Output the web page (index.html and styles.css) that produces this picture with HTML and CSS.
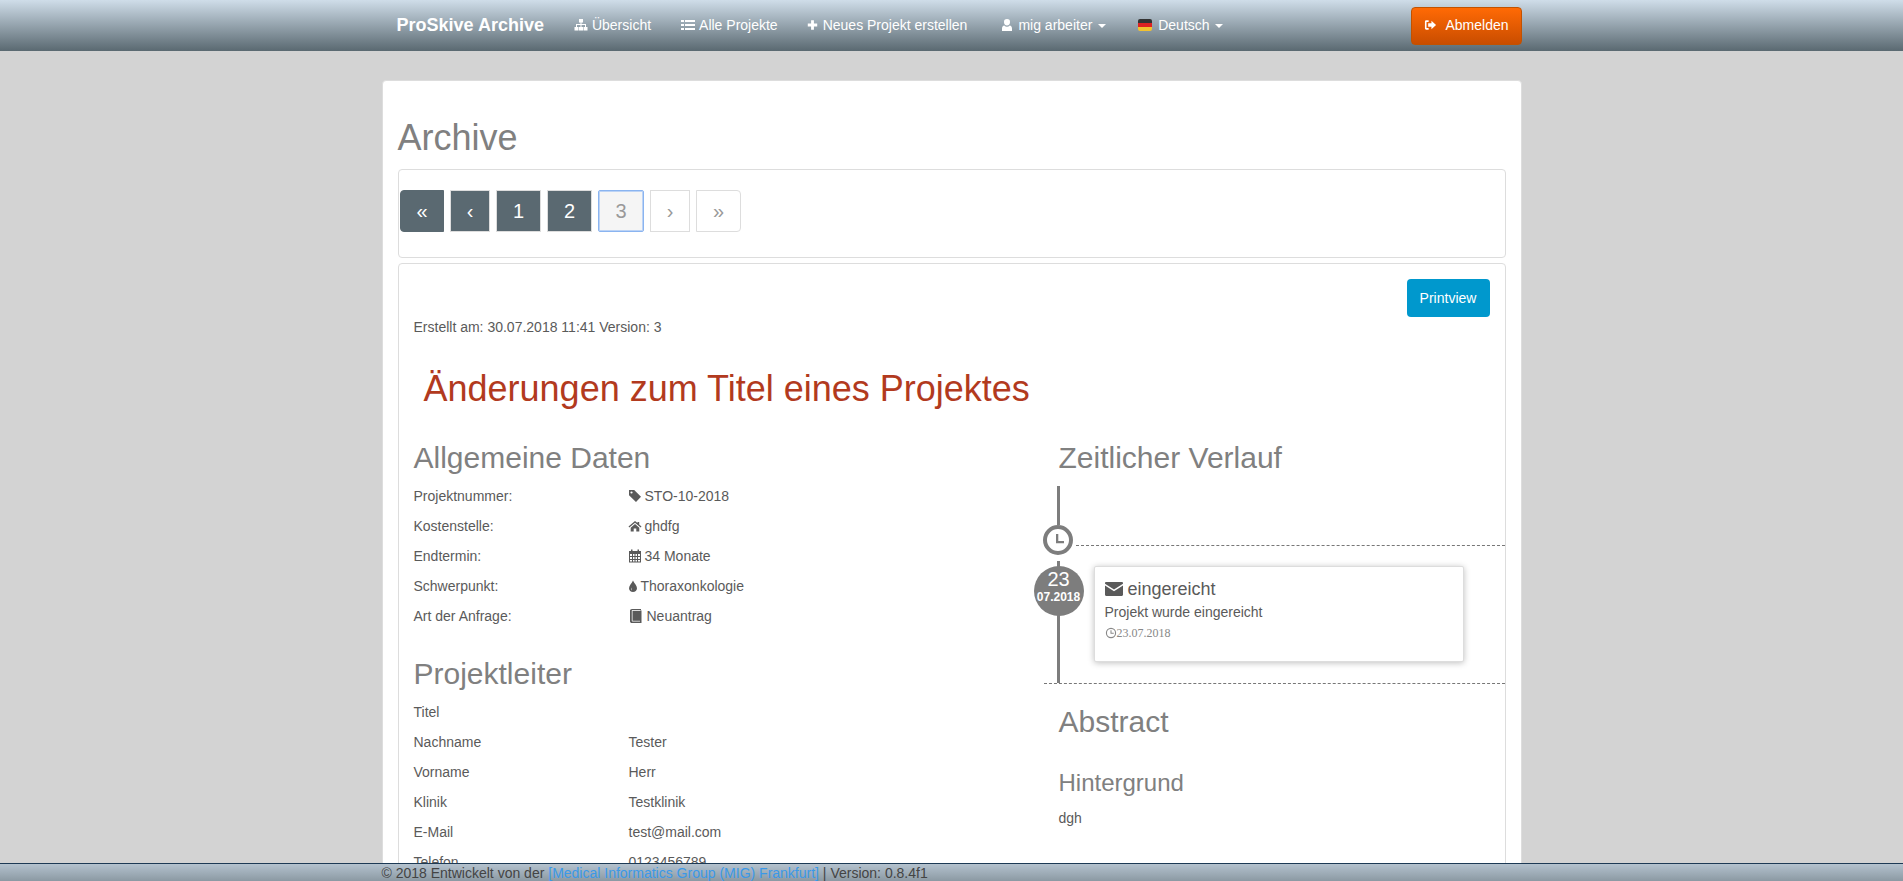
FILE: index.html
```html
<!DOCTYPE html>
<html>
<head>
  <title>ProSkive Archive</title>
  <link rel="stylesheet" href="styles.css">
</head>
<body>

<!-- Icon set -->
<svg class="icon-defs" xmlns="http://www.w3.org/2000/svg">
  <symbol id="i-sitemap" viewBox="0 0 14 14"><path d="M5 1h4v3.500H7.500V6H12v3h1.500v3.500h-4V9H11V7H7.500v2H9v3.500H5V9h1.500V7H3v2h1.500v3.500h-4V9H2V6h4.500V4.500H5z"/></symbol>
  <symbol id="i-list" viewBox="0 0 14 14"><path d="M0 2h3v2H0zM4 2h10v2H4zM0 6h3v2H0zM4 6h10v2H4zM0 10h3v2H0zM4 10h10v2H4z"/></symbol>
  <symbol id="i-plus" viewBox="0 0 14 14"><path d="M5.200 1h3.600v4.200H13v3.600H8.800V13H5.200V8.800H1V5.200h4.200z"/></symbol>
  <symbol id="i-user" viewBox="0 0 14 14"><path d="M7 1a3 3 0 0 1 3 3.200C10 6 9 7.500 7 7.500S4 6 4 4.200A3 3 0 0 1 7 1zM4.300 7.500C5 8.300 6 8.700 7 8.700s2-.4 2.700-1.200c1.500.2 2.300 1.300 2.300 3.300V13H2v-2.200c0-2 .8-3.100 2.300-3.300z"/></symbol>
  <symbol id="i-logout" viewBox="0 0 14 14"><path d="M5 2v1.700H2.700v6.600H5V12H2.500C1.500 12 1 11.400 1 10.500v-7C1 2.600 1.500 2 2.500 2zM8 2.500 13 7l-5 4.500V9H4.500V5H8z"/></symbol>
  <symbol id="i-tag" viewBox="0 0 14 14"><path d="M1 1h5.200L13 7.800 8 13 1 6.200zM3.500 2.400a1.100 1.100 0 1 0 0 2.200 1.100 1.100 0 0 0 0-2.200z" fill-rule="evenodd"/></symbol>
  <symbol id="i-home" viewBox="0 0 14 14"><path d="M7 2l2.500 2.100V3h1.700v2.500L13.500 7.500l-.8.900L7 3.700 1.300 8.400l-.8-.9zM2.700 8.700 7 5l4.300 3.700V12.500H8.300V9.500H5.700v3h-3z"/></symbol>
  <symbol id="i-calendar" viewBox="0 0 14 14"><path d="M3 .5h1.500V2h5V.5H11V2h2v11.500H1V2h2zM2 5v2h2V5zm3 0v2h1.500V5zm2.500 0v2H9V5zM10 5v2h2V5zM2 8v2h2V8zm3 0v2h1.500V8zm2.500 0v2H9V8zM10 8v2h2V8zM2 11v1.500h2V11zm3 0v1.500h1.500V11zm2.500 0v1.500H9V11zm2.500 0v1.500h2V11z" fill-rule="evenodd"/></symbol>
  <symbol id="i-tint" viewBox="0 0 8 14"><path d="M4 1.500C5 4.200 8 6.500 8 9.200 8 11.500 6.200 13 4 13S0 11.500 0 9.200C0 6.500 3 4.200 4 1.500zM2.500 8.500C1.800 9.500 1.800 11 3.200 11.500 2.600 10.800 2.300 9.800 2.500 8.500z" fill-rule="evenodd"/></symbol>
  <symbol id="i-book" viewBox="0 0 14 14"><path d="M3 0h9v1H3.500C3 1 2.800 1.300 2.800 1.600v10.200c0 .4.300.7.700.7H11V1.500h1.500V14H3c-1.200 0-2-.7-2-1.800V1.800C1 .7 1.800 0 3 0z"/><path d="M3.500 1.800H11v10H3.500z"/></symbol>
  <symbol id="i-envelope" viewBox="0 0 18 14"><path d="M1.200 0h15.600c.7 0 1.200.5 1.200 1.200v.5L9 7.500 0 1.700v-.5C0 .5.500 0 1.200 0zM0 3.500l9 5.800 9-5.800v9.300c0 .7-.5 1.200-1.200 1.200H1.200C.5 14 0 13.500 0 12.800z"/></symbol>
  <symbol id="i-clock" viewBox="0 0 14 14"><path d="M7 1a6 6 0 1 1 0 12A6 6 0 0 1 7 1zm0 1.300a4.700 4.700 0 1 0 0 9.400 4.700 4.700 0 0 0 0-9.400zM6.400 3.800h1.200v3h2.600V8H6.400z" fill-rule="evenodd"/></symbol>
</svg>

<!-- Top bar -->
<nav class="navbar">
  <div class="navbar-inner">
    <a class="brand" href="#">ProSkive Archive</a>
    <a class="nav-link" href="#"><svg class="ico ico-nav"><use href="#i-sitemap"/></svg>Übersicht</a>
    <a class="nav-link" href="#"><svg class="ico ico-nav ico-list"><use href="#i-list"/></svg>Alle Projekte</a>
    <a class="nav-link" href="#"><svg class="ico ico-nav ico-plus"><use href="#i-plus"/></svg>Neues Projekt erstellen</a>
    <a class="nav-link nav-user" href="#"><svg class="ico ico-nav ico-user"><use href="#i-user"/></svg>mig arbeiter <span class="caret"></span></a>
    <a class="nav-link nav-lang" href="#">
      <svg class="flag" viewBox="0 0 14 12"><rect width="14" height="4" fill="#333"/><rect y="4" width="14" height="4" fill="#d22"/><rect y="8" width="14" height="4" fill="#f2c230"/></svg>Deutsch <span class="caret"></span>
    </a>
    <a class="btn-logout" href="#"><svg class="ico ico-logout"><use href="#i-logout"/></svg>Abmelden</a>
  </div>
</nav>

<main class="card">
  <h1 class="page-title">Archive</h1>

  <div class="panel panel-pager">
    <ul class="pager">
      <li class="page first">«</li>
      <li class="page arrow">‹</li>
      <li class="page">1</li>
      <li class="page">2</li>
      <li class="page current">3</li>
      <li class="page off arrow">›</li>
      <li class="page off">»</li>
    </ul>
  </div>

  <div class="panel panel-main">
    <div class="print-row"><a class="btn-print" href="#">Printview</a></div>
    <p class="meta">Erstellt am: 30.07.2018 11:41 Version: 3</p>
    <h1 class="project-title">Änderungen zum Titel eines Projektes</h1>

    <div class="columns">
      <section class="col-left">
        <h2 class="head">Allgemeine Daten</h2>
        <dl class="rows">
          <dt>Projektnummer:</dt><dd><svg class="ico ico-val"><use href="#i-tag"/></svg>STO-10-2018</dd>
          <dt>Kostenstelle:</dt><dd><svg class="ico ico-val"><use href="#i-home"/></svg>ghdfg</dd>
          <dt>Endtermin:</dt><dd><svg class="ico ico-val"><use href="#i-calendar"/></svg>34 Monate</dd>
          <dt>Schwerpunkt:</dt><dd><svg class="ico ico-tint"><use href="#i-tint"/></svg>Thoraxonkologie</dd>
          <dt>Art der Anfrage:</dt><dd><svg class="ico ico-book"><use href="#i-book"/></svg>Neuantrag</dd>
        </dl>

        <h2 class="head head-leader">Projektleiter</h2>
        <dl class="rows rows-leader">
          <dt>Titel</dt><dd></dd>
          <dt>Nachname</dt><dd>Tester</dd>
          <dt>Vorname</dt><dd>Herr</dd>
          <dt>Klinik</dt><dd>Testklinik</dd>
          <dt>E-Mail</dt><dd>test@mail.com</dd>
          <dt>Telefon</dt><dd>0123456789</dd>
        </dl>
      </section>

      <section class="col-right">
        <h2 class="head">Zeitlicher Verlauf</h2>

        <div class="timeline">
          <div class="tl-head">
            <div class="tl-clock"><span class="tl-clock-ring"><svg viewBox="0 0 16 16"><path d="M6 2h2.300v7H14v2.200H6z"/></svg></span></div>
          </div>
          <div class="tl-event">
            <div class="tl-date"><span class="tl-day">23</span><span class="tl-month">07.2018</span></div>
            <div class="tl-card">
              <h4 class="tl-title"><svg class="ico ico-env"><use href="#i-envelope"/></svg>eingereicht</h4>
              <p class="tl-text">Projekt wurde eingereicht</p>
              <small class="tl-when"><svg class="ico ico-when"><use href="#i-clock"/></svg>23.07.2018</small>
            </div>
          </div>
        </div>

        <h2 class="head head-abstract">Abstract</h2>
        <h3 class="subhead">Hintergrund</h3>
        <p class="abstract-text">dgh</p>
      </section>
    </div>
  </div>
</main>

<footer class="footer">
  <div class="footer-inner">© 2018 Entwickelt von der <a href="#">[Medical Informatics Group (MIG) Frankfurt]</a> | Version: 0.8.4f1</div>
</footer>

</body>
</html>
```

FILE: styles.css
```css
* {
  box-sizing: border-box;
}
html, body {
  height: 100%;
  overflow: hidden;
}
body {
  margin: 0;
  background: #d3d3d3;
  color: #5a5a5a;
  font-family: "Liberation Sans", Arial, sans-serif;
  font-size: 14px;
  line-height: 20px;
}
a {
  text-decoration: none;
}
.icon-defs {
  display: none;
}
.ico {
  display: inline-block;
  width: 14px;
  height: 14px;
  margin-right: 3px;
  vertical-align: -2px;
  fill: currentColor;
}

/* Top bar */
.navbar {
  height: 51px;
  background: linear-gradient(to bottom, #cfdde9 0%, #5a6971 100%);
}
.navbar-inner {
  display: flex;
  align-items: center;
  width: 1140px;
  height: 51px;
  margin: 0 auto;
}
.brand {
  margin-bottom: 2px;
  padding: 0 15px;
  color: #fff;
  font-size: 18px;
  font-weight: bold;
}
.nav-link {
  margin-bottom: 2px;
  padding: 0 15px;
  color: #fff;
  white-space: nowrap;
}
.ico-nav {
  margin-right: 4px;
}
.ico-list {
  margin-right: 4px;
}
.ico-plus {
  width: 11px;
  margin-left: -1px;
  margin-right: 5px;
}
.nav-user {
  margin-left: 3px;
}
.ico-user {
  margin-right: 4px;
}
.nav-lang {
  margin-left: 2px;
}
.flag {
  width: 14px;
  height: 12px;
  margin-right: 6px;
  vertical-align: -1px;
  border-radius: 2px;
}
.caret {
  display: inline-block;
  width: 0;
  height: 0;
  margin-left: 2px;
  vertical-align: 2px;
  border-top: 4px solid #fff;
  border-left: 4px solid transparent;
  border-right: 4px solid transparent;
}
.btn-logout {
  margin-left: auto;
  width: 111px;
  height: 38px;
  padding: 7px 0 0 12px;
  color: #fff;
  background: linear-gradient(to bottom, #ff6a05 0%, #c94d00 100%);
  border: 1px solid #c25200;
  border-radius: 4px;
}
.ico-logout {
  width: 13px;
  margin-right: 9px;
}

/* Main card */
.card {
  width: 1140px;
  margin: 29px auto 0;
  padding: 37px 15px 40px;
  background: #fff;
  border: 1px solid #ddd;
  border-radius: 4px;
}
.page-title {
  margin: 0 0 11px;
  color: #808080;
  font-size: 36px;
  font-weight: 500;
  line-height: 40px;
}
.panel {
  border: 1px solid #ddd;
  border-radius: 4px;
}
.panel-pager {
  height: 89px;
  margin-bottom: 5px;
  padding: 20px 0 0 1px;
}
.pager {
  display: flex;
  gap: 6px;
  margin: 0;
  padding: 0;
  list-style: none;
}
.page {
  width: 45px;
  height: 42px;
  padding-left: 1px;
  color: #fff;
  background: #5a6971;
  border: 1px solid #ddd;
  font-size: 20px;
  line-height: 40px;
  text-align: center;
}
.first {
  width: 44px;
  border-color: #5a6971;
  border-radius: 4px 0 0 4px;
}
.arrow {
  width: 40px;
}
.current {
  width: 46px;
  color: #999;
  background: #f5f5f5;
  border-color: #8ab4f0;
  border-radius: 2px;
  box-shadow: inset 0 0 0 1px #bcd3f5;
}
.off {
  color: #999;
  background: #fff;
}
.off:last-child {
  width: 45px;
  border-radius: 0 4px 4px 0;
}
.panel-main {
  padding: 15px;
}
.print-row {
  display: flex;
  justify-content: flex-end;
}
.btn-print {
  width: 83px;
  padding: 9px 0;
  color: #fff;
  text-align: center;
  background: #0098cd;
  border-radius: 4px;
}
.meta {
  margin: 0;
}
.project-title {
  margin: 32px 0 32px;
  padding-left: 10px;
  color: #b23a1e;
  font-size: 36px;
  font-weight: 500;
  line-height: 40px;
}

/* Two columns, 7/5 */
.columns {
  display: grid;
  grid-template-columns: 645px 1fr;
  margin: 0 -15px;
}
.col-left {
  padding-left: 15px;
}
.head {
  margin: 0;
  color: #808080;
  font-size: 30px;
  font-weight: 500;
  line-height: 33px;
}
.rows {
  display: grid;
  grid-template-columns: 215px 1fr;
  grid-auto-rows: 29.9px;
  align-items: center;
  margin: 7px 0 0;
}
.rows dd {
  margin: 0;
}
.head-leader {
  margin-top: 27px;
}
.rows-leader {
  margin-top: 7px;
}
.ico-val {
  margin-left: -1px;
}
.ico-tint {
  width: 8px;
  margin-right: 4px;
}
.ico-book {
  margin-right: 4px;
}

/* Timeline */
.col-right .head {
  padding-left: 15px;
}
.timeline {
  position: relative;
  height: 198px;
  margin: 12px 0 0 0;
}
.timeline::before {
  content: "";
  position: absolute;
  top: 0;
  left: 13px;
  width: 3px;
  height: 197px;
  background: #7d7d7d;
}
.tl-head {
  height: 60px;
  margin-left: 32px;
  border-bottom: 1px dashed #777;
}
.tl-clock {
  position: absolute;
  top: 39px;
  left: -1px;
  width: 30px;
  height: 36px;
  background: #fff;
}
.tl-clock-ring {
  display: block;
  width: 30px;
  height: 30px;
  padding: 3px;
  border: 4px solid #7d7d7d;
  border-radius: 50%;
  fill: #7d7d7d;
}
.tl-clock-ring svg {
  display: block;
  width: 16px;
  height: 16px;
}
.tl-event {
  height: 138px;
  padding: 20px 41px 0 50px;
  border-bottom: 1px dashed #777;
}
.tl-date {
  position: absolute;
  top: 80px;
  left: -10px;
  width: 50px;
  height: 50px;
  padding-top: 3px;
  color: #fff;
  text-align: center;
  background: #7d7d7d;
  border-radius: 50%;
}
.tl-day {
  display: block;
  font-size: 20px;
  line-height: 21px;
}
.tl-month {
  display: block;
  font-size: 12px;
  font-weight: bold;
  line-height: 14px;
}
.tl-card {
  height: 96px;
  padding: 10px;
  background: #fff;
  border: 1px solid #ddd;
  border-radius: 2px;
  box-shadow: 0 1px 6px rgba(0,0,0,0.25);
}
.tl-title {
  margin: 0;
  color: #5a5a5a;
  font-size: 18px;
  font-weight: 500;
  line-height: 24px;
}
.ico-env {
  width: 18px;
  margin-right: 5px;
  vertical-align: -1px;
}
.tl-text {
  margin: 1px 0 0;
}
.tl-when {
  display: block;
  margin-top: 1px;
  color: #888;
  font-family: "Liberation Serif", "Times New Roman", serif;
  font-size: 12px;
  line-height: 20px;
}
.ico-when {
  width: 12px;
  height: 12px;
  margin-right: 0;
}
.head-abstract {
  margin-top: 21px;
}
.subhead {
  margin: 32px 0 0;
  padding-left: 15px;
  color: #808080;
  font-size: 24px;
  font-weight: 500;
  line-height: 26px;
}
.abstract-text {
  margin: 12px 0 0;
  padding-left: 15px;
}

/* Footer stays on the window edge */
.footer {
  position: fixed;
  left: 0;
  right: 0;
  bottom: 0;
  height: 18px;
  background: linear-gradient(to bottom, #b4c2ce 0%, #8b99a3 100%);
  border-top: 1px solid #1d3a55;
}
.footer-inner {
  width: 1140px;
  margin: 0 auto;
  line-height: 19px;
  color: #444;
}
.footer a {
  color: #3b99e8;
}
```
